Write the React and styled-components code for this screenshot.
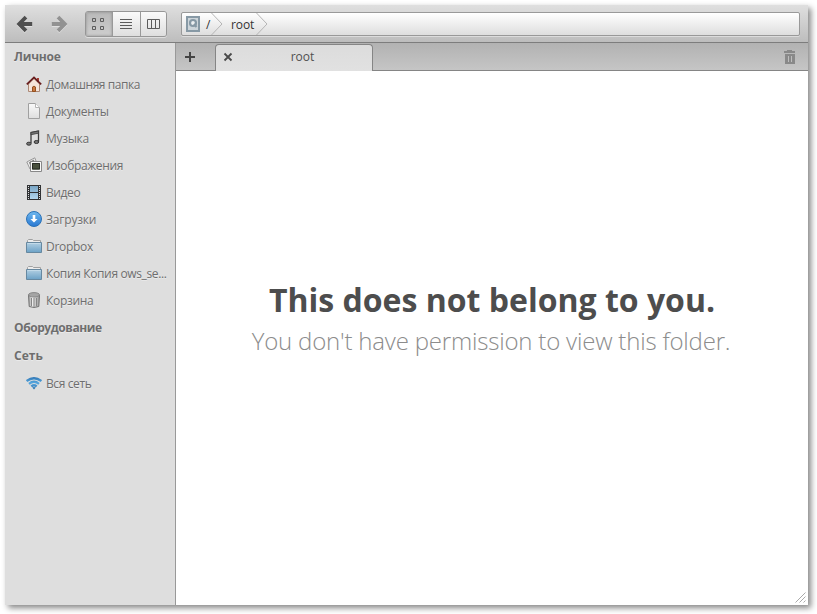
import React from 'react';
import styled, { createGlobalStyle } from 'styled-components';

const Global = createGlobalStyle`
  * { box-sizing: border-box; }
  body { margin: 0; background: #fff; overflow: hidden; font-family: "Open Sans", "Noto Sans", sans-serif; }
`;
const Page = styled.div`
  width: 817px; height: 614px; padding: 5px 9px 9px 5px; background: #fff;
`;
const Window = styled.div`
  width: 803px; height: 600px; display: flex; flex-direction: column;
  background: #fff; box-shadow: 3px 3px 6px rgba(0,0,0,.48);
`;
const Toolbar = styled.header`
  height: 38px; flex: none; display: flex; align-items: center;
  padding: 0 8px 0 10px; border-bottom: 1px solid #7d7d7d;
  background: linear-gradient(#dfdfdf, #bdbdbd);
`;
const NavButton = styled.button`
  width: 20px; height: 20px; padding: 0; border: 0; background: none;
  margin-right: ${p => p.$gap}px; display: flex; color: ${p => p.$color};
`;
const ViewSwitch = styled.div`
  display: flex; width: 82px; height: 26px; border: 1px solid #969696; border-radius: 3px;
  overflow: hidden; box-shadow: 0 1px 0 #dedede; margin-right: 14px;
`;
const ViewButton = styled.button`
  width: ${p => p.$width}px; padding: 0 ${p => p.$shift}px 0 0; border: 0; display: flex; align-items: center; justify-content: center;
  border-right: ${p => (p.$last ? 0 : '1px solid #999')};
  background: ${p => (p.$active ? 'linear-gradient(#b9b9b9, #cecece)' : 'linear-gradient(#fafafa, #dedede)')};
  box-shadow: ${p => (p.$active ? 'inset 0 0 3px #8c8c8c' : 'none')};
`;
const PathBar = styled.nav`
  flex: 1; height: 24px; display: flex; align-items: center; padding-left: 4px; overflow: hidden;
  border: 1px solid #999; border-radius: 2px; box-shadow: 0 1px 0 #dcdcdc;
  background: linear-gradient(#fff, #dedede);
`;
const Crumb = styled.span`
  width: ${p => p.$width}px; padding: 2px 0 0 ${p => p.$pad}px; font-size: 12px; line-height: 20px;
  color: #333; letter-spacing: ${p => p.$spacing || 0}px; white-space: nowrap;
`;
const Body = styled.div`flex: 1; min-height: 0; display: flex;`;
const Sidebar = styled.aside`
  width: 171px; flex: none; background: #dedede; border-right: 1px solid #999; color: #6e6e6e;
  text-shadow: 0 1px 0 rgba(255,255,255,.4);
`;
const Heading = styled.h2`
  margin: 0; height: 28px; padding-left: 9px; line-height: 27px;
  font-size: 12px; font-weight: 700; letter-spacing: ${p => p.$spacing || 0}px;
`;
const Place = styled.div`
  height: 27px; display: flex; align-items: center; padding-left: 21px; gap: 4px;
  font-size: 12px; white-space: nowrap; letter-spacing: ${p => p.$spacing || 0}px;
`;
const IconSvg = styled.svg`flex: none; margin-bottom: 1px;`;
const Main = styled.main`flex: 1; min-width: 0; display: flex; flex-direction: column;`;
const TabBar = styled.div`
  height: 28px; flex: none; display: flex; align-items: stretch; padding-top: 1px;
  background: linear-gradient(#b2b2b2, #c6c6c6);
  box-shadow: inset 0 -1px 0 #858585;
`;
const AddTab = styled.button`
  width: 39px; padding: 0 0 2px 8px; border: 0; background: none; display: flex; align-items: center;
`;
const Tab = styled.div`
  width: 158px; display: flex; align-items: center; padding: 0 0 3px 7px;
  border: 1px solid #858585; border-bottom: 0; border-radius: 4px 4px 0 0;
  background: linear-gradient(#dcdcdc, #e1e1e1);
`;
const TabTitle = styled.span`
  flex: 1; text-align: center; font-size: 12px; line-height: 20px; color: #505050;
`;
const TrashSlot = styled.div`margin-left: auto; padding: 0 12px 2px 0; display: flex; align-items: center;`;
const Content = styled.section`
  flex: 1; display: flex; flex-direction: column; align-items: center; padding-top: 207px; background: #fff;
`;
const Title = styled.h1`
  margin: 0; font-size: 32px; line-height: 44px; font-weight: 700; color: #4d4d4d; white-space: nowrap;
`;
const Subtitle = styled.p`
  margin: 0; font-size: 24px; line-height: 38px; font-weight: 300; color: #8c8c8c; white-space: nowrap;
  letter-spacing: -.19px; padding-right: 2px;
`;
const GripSlot = styled.div`margin-top: auto; align-self: flex-end; padding: 0 2px 2px 0; display: flex;`;

const Arrow = ({ flip }) => (
  <svg width="20" height="20" viewBox="0 0 20 20">
    <g transform={flip ? 'translate(20 0) scale(-1 1)' : undefined} fill="none" strokeWidth="3.8">
      <path d="M11 3.2 4.2 10 11 16.8M5 10H17.2" stroke="#fff" opacity=".4" transform="translate(0 1)" />
      <path d="M11 3.2 4.2 10 11 16.8M5 10H17.2" stroke="currentColor" />
    </g>
  </svg>
);
const GridIcon = () => (
  <svg width="14" height="14" fill="none" stroke="#5c5c5c">
    <path d="M1.5 1.5h3v3h-3zM9.5 1.5h3v3h-3zM1.5 9.5h3v3h-3zM9.5 9.5h3v3h-3z" />
  </svg>
);
const ListIcon = () => (
  <svg width="12" height="12" stroke="#5c5c5c"><path d="M0 1.5h12M0 4.5h12M0 7.5h12M0 10.5h12" /></svg>
);
const ColumnsIcon = () => (
  <svg width="13" height="10" fill="none" stroke="#5c5c5c"><path d="M.5.5h12v9H.5zM4.5.5v9M8.5.5v9" /></svg>
);
const DiskIcon = () => (
  <svg width="14" height="16" viewBox="0 0 14 16">
    <path d="M1 1h12v14H1z" fill="#cdd5da" stroke="#8799a5" strokeWidth="2" />
    <circle cx="7" cy="7" r="3" fill="#edf0f2" stroke="#8799a5" strokeWidth="2.2" />
    <path d="m8 8 2.5 3" stroke="#8799a5" strokeWidth="2" />
  </svg>
);
const Chevron = () => (
  <svg width="12" height="22" fill="none"><path d="M.5 0 11 11 .5 22" stroke="#b5b5b5" /></svg>
);

const icons = {
  home: (<>
    <path d="M2.5 8v7.5h11V8L8 2.5z" fill="#f4e4d9" stroke="#ac8875" />
    <path d="M11 2h2v4h-2z" fill="#a33c32" />
    <path d="M.8 8.3 8 1.5l7.2 6.8" fill="none" stroke="#651a1a" strokeWidth="1.7" />
    <path d="M6.5 15.5V11q1.5-1.7 3 0v4.5z" fill="#c9783f" stroke="#94501f" />
  </>),
  doc: (<>
    <path d="M2.5.5h7l4 4v11h-11z" fill="url(#paper)" stroke="#a0a0a0" />
    <path d="M9.5.5v4h4" fill="#fff" stroke="#b5b5b5" />
  </>),
  music: (<>
    <path d="M5 13V2.5L12.5 1v10.5" fill="none" stroke="#3c3c3c" strokeWidth="1.3" />
    <path d="M5 2.5 12.5 1v2.2L5 4.7z" fill="#777" stroke="#3c3c3c" strokeWidth=".8" />
    <ellipse cx="2.9" cy="13.7" rx="2.3" ry="1.5" fill="#777" stroke="#333" />
    <ellipse cx="10.4" cy="12" rx="2.3" ry="1.5" fill="#777" stroke="#333" />
  </>),
  pictures: (<>
    <path d="m.8 5 8-4.2 3 8L4 12z" fill="#eee" stroke="#999" />
    <path d="m2.8 5.4 5-2.8 1 3-4 4z" fill="#858585" />
    <path d="M4.5 4.5h11v10h-11z" fill="#f8f8f8" stroke="#888" />
    <path d="M6 6h8v6.5H6z" fill="#49503d" />
    <path d="M6.5 6.5h7v5.5h-7z" fill="none" stroke="#292c25" />
  </>),
  video: (<>
    <path d="M1 1h14v15H1z" fill="#303234" />
    <path d="M4 2h8v6H4zM4 9h8v6H4z" fill="url(#filmBlue)" />
    <path d="M2.5 2v14M13.5 2v14" stroke="#ddd" strokeDasharray="1 1" />
  </>),
  download: (<>
    <circle cx="8" cy="8" r="7.5" fill="url(#ballBlue)" stroke="#2b72b7" />
    <path d="M6.7 4h2.6v4h2.3L8 11.6 4.4 8h2.3z" fill="#fff" />
  </>),
  folder: (<>
    <path d="M1.5 6V2.5l1-1h4l1 1h7V6" fill="#ececec" stroke="#a1a1a1" />
    <path d="M.5 4.5h15v10H.5z" fill="url(#folderBlue)" stroke="#6688a0" />
    <path d="M1.5 5.5h13" stroke="#c2dae9" />
  </>),
  bin: (<>
    <path d="M2.5 3h11l-.7 11.5q-4.8 2-9.6 0z" fill="url(#binGray)" stroke="#737373" />
    <ellipse cx="8" cy="2.8" rx="5.5" ry="2.2" fill="#a5a5a5" stroke="#888" />
    <path d="M5.5 6v8M8 6v9M10.5 6v8" stroke="#858585" />
  </>),
  network: (
    <g fill="none" stroke="url(#wifiBlue)" strokeWidth="2.3">
      <path d="M.6 6q7.4-5.6 14.8 0M3 8.8q5-4 10 0M5.3 11.3q2.7-2.2 5.4 0" />
      <path d="m6.2 12.5 1.8 1.9 1.8-1.9q-1.8-1.2-3.6 0z" fill="#347db7" stroke="none" />
    </g>
  ),
};
const PlaceIcon = ({ name }) => (
  <IconSvg width="16" height="16" viewBox="0 0 16 16">{icons[name]}</IconSvg>
);
const GradientDefs = styled.svg`display: block;`;
const Gradients = () => (
  <GradientDefs width="0" height="0">
    <defs>
      <linearGradient id="paper" x2="0" y2="1"><stop stopColor="#fafafa" /><stop offset="1" stopColor="#dedede" /></linearGradient>
      <linearGradient id="filmBlue" x2="0" y2="1"><stop stopColor="#79a5c5" /><stop offset="1" stopColor="#b2d6ee" /></linearGradient>
      <linearGradient id="ballBlue" x2="0" y2="1"><stop stopColor="#70b9ef" /><stop offset="1" stopColor="#2878d2" /></linearGradient>
      <linearGradient id="folderBlue" x2="0" y2="1"><stop stopColor="#b3d0e3" /><stop offset="1" stopColor="#6ba1c6" /></linearGradient>
      <linearGradient id="binGray"><stop stopColor="#999" /><stop offset=".35" stopColor="#eee" /><stop offset="1" stopColor="#979797" /></linearGradient>
      <linearGradient id="wifiBlue" gradientUnits="userSpaceOnUse" x1="0" y1="2" x2="0" y2="14"><stop stopColor="#2f76b5" /><stop offset=".5" stopColor="#57a8df" /><stop offset="1" stopColor="#2f76b5" /></linearGradient>
    </defs>
  </GradientDefs>
);

const places = [
  ['home', 'Домашняя папка', -0.42], ['doc', 'Документы', -0.32], ['music', 'Музыка', -0.3],
  ['pictures', 'Изображения', -0.32], ['video', 'Видео', -0.4], ['download', 'Загрузки', -0.2],
  ['folder', 'Dropbox', -0.28], ['folder', 'Копия Копия ows_se...', -0.36], ['bin', 'Корзина', -0.3],
];

export default function App() {
  return (
    <Page>
      <Global />
      <Gradients />
      <Window>
        <Toolbar>
          <NavButton $gap={14} $color="#4f4f4f" aria-label="Back"><Arrow /></NavButton>
          <NavButton $gap={16} $color="#929292" aria-label="Forward"><Arrow flip /></NavButton>
          <ViewSwitch>
            <ViewButton $width={27} $shift={2} $active aria-label="Icons"><GridIcon /></ViewButton>
            <ViewButton $width={28} $shift={1} aria-label="List"><ListIcon /></ViewButton>
            <ViewButton $width={25} $shift={0} $last aria-label="Columns"><ColumnsIcon /></ViewButton>
          </ViewSwitch>
          <PathBar>
            <DiskIcon />
            <Crumb $width={11} $pad={6}>/</Crumb>
            <Chevron />
            <Crumb $width={33} $pad={8} $spacing={-0.1}>root</Crumb>
            <Chevron />
          </PathBar>
        </Toolbar>
        <Body>
          <Sidebar>
            <Heading $spacing={-0.2}>Личное</Heading>
            {places.map(([icon, label, spacing]) => (
              <Place key={label} $spacing={spacing}><PlaceIcon name={icon} /><span>{label}</span></Place>
            ))}
            <Heading $spacing={-0.42}>Оборудование</Heading>
            <Heading>Сеть</Heading>
            <Place $spacing={-0.38}><PlaceIcon name="network" /><span>Вся сеть</span></Place>
          </Sidebar>
          <Main>
            <TabBar>
              <AddTab aria-label="New tab">
                <svg width="12" height="12" stroke="#444" strokeWidth="2"><path d="M6 1v10M1 6h10" /></svg>
              </AddTab>
              <Tab>
                <svg width="10" height="10" stroke="#4a4a4a" strokeWidth="1.8"><path d="m1.5 1.5 7 7m0-7-7 7" /></svg>
                <TabTitle>root</TabTitle>
              </Tab>
              <TrashSlot>
                <svg width="13" height="14" fill="#898989">
                  <path d="M4 0h5v1h3v2H1V1h3z" />
                  <path fillRule="evenodd" d="M2 4h10v10H2zM5 6v6h1V6zm3 0v6h1V6z" />
                </svg>
              </TrashSlot>
            </TabBar>
            <Content>
              <Title>This does not belong to you.</Title>
              <Subtitle>You don't have permission to view this folder.</Subtitle>
              <GripSlot>
                <svg width="11" height="11" stroke="#aaa"><path d="M.5 10.5l10-10M4.5 10.5l6-6M8.5 10.5l2-2" /></svg>
              </GripSlot>
            </Content>
          </Main>
        </Body>
      </Window>
    </Page>
  );
}
